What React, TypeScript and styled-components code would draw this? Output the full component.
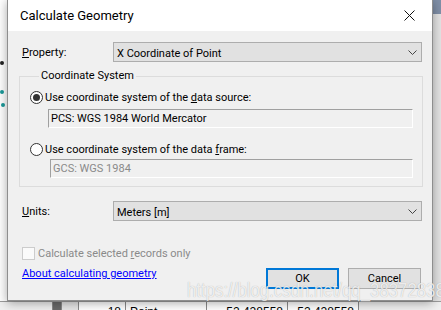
import React from 'react'
import styled, { createGlobalStyle } from 'styled-components'

const Global = createGlobalStyle`
  html, body {
    margin: 0;
    padding: 0;
    background: #fff;
  }
  body {
    font-family: Roboto, 'Liberation Sans', sans-serif;
  }
`

const App = () => {
  return (
    <>
      <Global />
      <Screen>
        <Backdrop>
          <MapArea>
            <Pin $x={0} $y={61} $color="#222" />
            <Pin $x={0} $y={90} $color="#1c9a9a" />
            <Pin $x={1} $y={103} $color="#1c9a9a" />
          </MapArea>
          <SideStrip />
        </Backdrop>
        <TableRow>
          <Cell $w={53} $bg="#f0f0f0" />
          <Cell $w={4} $bg="#6a6a6a" />
          <Cell $w={17} $bg="#e6e6e6" />
          <Cell $w={47} $align="right">18</Cell>
          <Cell $w={81}>Point</Cell>
          <Cell $w={81} $align="right">52.428558</Cell>
          <Cell $w={71} $align="right">52.428558</Cell>
          <Cell $w={87} $bg="#f0f0f0" />
        </TableRow>

        <Window>
          <TitleBar>
            <Title>Calculate Geometry</Title>
            <CloseIcon width="11" height="11" viewBox="0 0 11 11">
              <path d="M0.5 0.5 L10.5 10.5 M10.5 0.5 L0.5 10.5" stroke="#111" strokeWidth="1" />
            </CloseIcon>
          </TitleBar>

          <Body>
            <FormRow $top={11}>
              <Label>
                <u>P</u>roperty:
              </Label>
              <Combo>
                <span>X Coordinate of Point</span>
                <Chevron />
              </Combo>
            </FormRow>

            <Group>
              <Legend>Coordinate System</Legend>
              <RadioRow $top={5}>
                <Radio $checked />
                <span>
                  Use coordinate system of the <u>d</u>ata source:
                </span>
              </RadioRow>
              <Field $top={4} $indent={18}>PCS: WGS 1984 World Mercator</Field>
              <RadioRow $top={13}>
                <Radio />
                <span>
                  Use coordinate system of the data <u>f</u>rame:
                </span>
              </RadioRow>
              <Field $top={2} $indent={20} $disabled>
                GCS: WGS 1984
              </Field>
            </Group>

            <FormRow $top={14}>
              <Label>
                <u>U</u>nits:
              </Label>
              <Combo>
                <span>Meters [m]</span>
                <Chevron />
              </Combo>
            </FormRow>

            <CheckRow>
              <CheckBox />
              <span>
                Calculate selected <u>r</u>ecords only
              </span>
            </CheckRow>

            <Footer>
              <HelpLink href="#">About calculating geometry</HelpLink>
              <Buttons>
                <Button $primary>OK</Button>
                <Button>Cancel</Button>
              </Buttons>
            </Footer>
          </Body>
        </Window>

        <Watermark>https://blog.csdn.net/qq_38372838</Watermark>
      </Screen>
    </>
  )
}

export default App

// Helpers
function Chevron() {
  return (
    <ChevronSvg width="9" height="5" viewBox="0 0 9 5">
      <polyline points="0.5,0.5 4.5,4.5 8.5,0.5" fill="none" stroke="#444" strokeWidth="1" />
    </ChevronSvg>
  )
}

// Styles
const Screen = styled.div`
  position: relative;
  width: 441px;
  height: 310px;
  overflow: hidden;
  display: flex;
  flex-direction: column;
  background: #fff;
`

const Backdrop = styled.div`
  display: flex;
  height: 302px;
`

const MapArea = styled.div`
  position: relative;
  flex: 1;
  background: #fff;
`

const Pin = styled.span<{ $x: number; $y: number; $color: string }>`
  position: absolute;
  left: ${(p) => p.$x}px;
  top: ${(p) => p.$y}px;
  width: 4px;
  height: 4px;
  border-radius: 50%;
  background: ${(p) => p.$color};
`

const SideStrip = styled.div`
  width: 8px;
  background: linear-gradient(to bottom, #8090a8 0, #8090a8 14px, #e4e4e4 14px);
`

const TableRow = styled.div`
  display: flex;
  height: 8px;
  border-top: 1px solid #9c9c9c;
  background: #fff;
`

const Cell = styled.div<{ $w: number; $bg?: string; $align?: string }>`
  flex: 0 0 ${(p) => p.$w}px;
  box-sizing: border-box;
  padding: 3px 4px 0;
  border-right: 1px solid #8a8a8a;
  background: ${(p) => p.$bg || '#fff'};
  text-align: ${(p) => p.$align || 'left'};
  font-family: 'Liberation Sans', sans-serif;
  font-size: 12px;
  line-height: 14px;
  color: #000;
  overflow: hidden;
`

const Window = styled.div`
  position: absolute;
  left: 7px;
  top: -1px;
  width: 426px;
  height: 302px;
  box-sizing: border-box;
  border: 1px solid #8e8e8e;
  box-shadow: 0 2px 10px rgba(0, 0, 0, 0.35);
  background: #f0f0f0;
  display: flex;
  flex-direction: column;
  font-family: Roboto, 'Liberation Sans', sans-serif;
  font-size: 11px;
  color: #000;
`

const TitleBar = styled.div`
  height: 31px;
  flex: 0 0 31px;
  display: flex;
  align-items: center;
  justify-content: space-between;
  padding: 0 17px 0 12px;
  background: #fff;
`

const Title = styled.span`
  font-size: 13px;
  color: #000;
`

const CloseIcon = styled.svg`
  display: block;
`

const Body = styled.div`
  flex: 1;
  display: flex;
  flex-direction: column;
  padding: 0 9px 0 11px;
`

const FormRow = styled.div<{ $top: number }>`
  display: flex;
  align-items: center;
  margin: ${(p) => p.$top}px 1px 0 3px;
`

const Label = styled.span`
  width: 91px;
  flex: 0 0 91px;
  padding-top: 2px;
  line-height: 16px;
`

const Combo = styled.div`
  flex: 1;
  height: 20px;
  box-sizing: border-box;
  display: flex;
  align-items: center;
  justify-content: space-between;
  padding: 2px 4px 0 3px;
  background: #e1e1e1;
  border: 1px solid #adadad;
`

const ChevronSvg = styled.svg`
  display: block;
  margin-top: -2px;
`

const Group = styled.fieldset`
  margin: 6px 0 0;
  padding: 0 9px 8px 10px;
  min-width: 0;
  border: 1px solid #dcdcdc;
  display: flex;
  flex-direction: column;
`

const Legend = styled.legend`
  margin-left: 9px;
  padding: 0 2px;
  line-height: 16px;
`

const RadioRow = styled.div<{ $top: number }>`
  display: flex;
  align-items: center;
  gap: 2px;
  height: 16px;
  margin-top: ${(p) => p.$top}px;
`

const Radio = styled.span<{ $checked?: boolean }>`
  width: 13px;
  height: 13px;
  box-sizing: border-box;
  border-radius: 50%;
  border: 1px solid #333;
  background: #fff;
  display: flex;
  align-items: center;
  justify-content: center;

  &::after {
    content: '';
    display: ${(p) => (p.$checked ? 'block' : 'none')};
    width: 7px;
    height: 7px;
    border-radius: 50%;
    background: #333;
  }
`

const Field = styled.div<{ $top: number; $indent: number; $disabled?: boolean }>`
  margin-top: ${(p) => p.$top}px;
  margin-left: ${(p) => p.$indent}px;
  height: 19px;
  box-sizing: border-box;
  padding: 0 2px;
  display: flex;
  align-items: center;
  border-top: 1px solid #a0a0a0;
  border-left: 1px solid #a0a0a0;
  border-bottom: 1px solid #fff;
  border-right: 1px solid #fff;
  color: ${(p) => (p.$disabled ? '#8a8a8a' : '#000')};
`

const CheckRow = styled.div`
  display: flex;
  align-items: center;
  gap: 3px;
  height: 16px;
  margin: 24px 0 0 3px;
  color: #8a8a8a;
`

const CheckBox = styled.span`
  width: 13px;
  height: 13px;
  box-sizing: border-box;
  border: 1px solid #cccccc;
  background: #fafafa;
`

const Footer = styled.div`
  display: flex;
  justify-content: space-between;
  align-items: flex-start;
  margin: 7px 2px 0 3px;
`

const HelpLink = styled.a`
  color: #0000ff;
  text-decoration: underline;
  line-height: 16px;
  margin-top: -2px;
`

const Buttons = styled.div`
  display: flex;
  gap: 9px;
`

const Button = styled.button<{ $primary?: boolean }>`
  width: 73px;
  height: 21px;
  box-sizing: border-box;
  padding: 0;
  font-family: inherit;
  font-size: 11px;
  color: #000;
  background: #e1e1e1;
  border: ${(p) => (p.$primary ? '2px solid #0078d7' : '1px solid #adadad')};
`

const Watermark = styled.div`
  position: absolute;
  left: 187px;
  top: 278px;
  font-family: 'Liberation Sans', sans-serif;
  font-size: 21px;
  transform: scaleX(0.8);
  transform-origin: left center;
  color: rgba(255, 255, 255, 0.8);
  text-shadow: 0 0 1px rgba(0, 0, 0, 0.3);
  white-space: nowrap;
  pointer-events: none;
`
